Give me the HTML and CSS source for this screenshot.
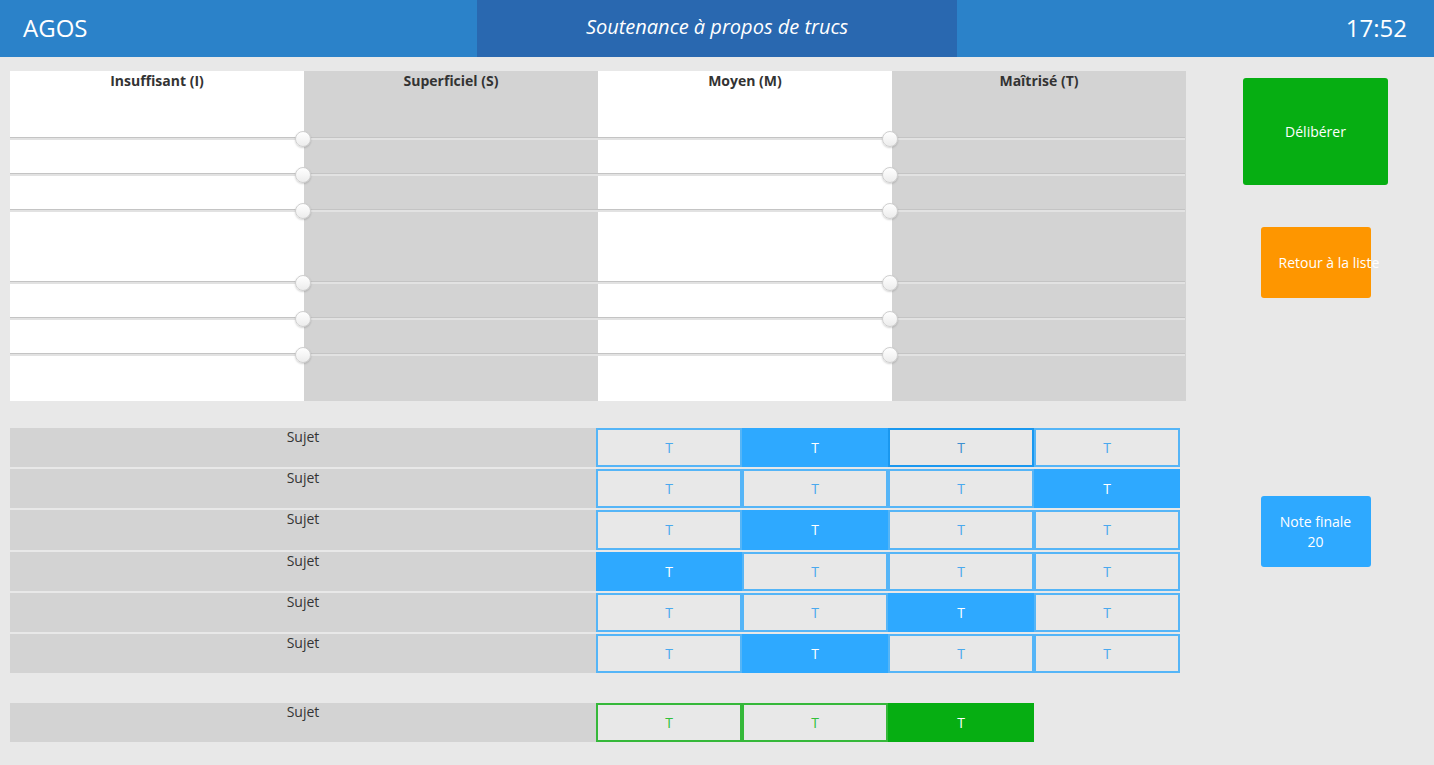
FILE: index.html
```html
<!DOCTYPE html>
<html lang="fr">
<head>
<meta charset="utf-8">
<title>AGOS</title>
<link rel="stylesheet" href="styles.css">
</head>
<body>
<header class="topbar">
  <div class="brand">AGOS</div>
  <div class="title">Soutenance à propos de trucs</div>
  <div class="clock">17:52</div>
</header>
<main class="main">
  <section class="content">
    <div class="scale">
      <div class="scale-head">
        <div>Insuffisant (I)</div>
        <div>Superficiel (S)</div>
        <div>Moyen (M)</div>
        <div>Maîtrisé (T)</div>
      </div>
      <div class="sliders">
        <div class="slot"><div class="track"><span class="knob lo"></span><span class="knob hi"></span></div></div>
        <div class="slot"><div class="track"><span class="knob lo"></span><span class="knob hi"></span></div></div>
        <div class="slot"><div class="track"><span class="knob lo"></span><span class="knob hi"></span></div></div>
        <div class="slot"></div>
        <div class="slot"><div class="track"><span class="knob lo"></span><span class="knob hi"></span></div></div>
        <div class="slot"><div class="track"><span class="knob lo"></span><span class="knob hi"></span></div></div>
        <div class="slot"><div class="track"><span class="knob lo"></span><span class="knob hi"></span></div></div>
      </div>
    </div>

    <div class="grades">
      <div class="subject">Sujet</div>
      <button class="opt">T</button><button class="opt on">T</button><button class="opt focus">T</button><button class="opt">T</button>
      <div class="subject">Sujet</div>
      <button class="opt">T</button><button class="opt">T</button><button class="opt">T</button><button class="opt on">T</button>
      <div class="subject">Sujet</div>
      <button class="opt">T</button><button class="opt on">T</button><button class="opt">T</button><button class="opt">T</button>
      <div class="subject">Sujet</div>
      <button class="opt on">T</button><button class="opt">T</button><button class="opt">T</button><button class="opt">T</button>
      <div class="subject">Sujet</div>
      <button class="opt">T</button><button class="opt">T</button><button class="opt on">T</button><button class="opt">T</button>
      <div class="subject">Sujet</div>
      <button class="opt">T</button><button class="opt on">T</button><button class="opt">T</button><button class="opt">T</button>
    </div>

    <div class="grades final">
      <div class="subject">Sujet</div>
      <button class="opt green">T</button><button class="opt green">T</button><button class="opt green on">T</button>
    </div>
  </section>

  <aside class="actions">
    <button class="act deliberate">Délibérer</button>
    <button class="act back">Retour à la liste</button>
    <button class="act note">Note finale<br>20</button>
  </aside>
</main>
</body>
</html>
```
FILE: styles.css
```css
* { box-sizing: border-box; }

html, body {
  margin: 0;
  padding: 0;
}

body {
  background: #e8e8e8;
  font-family: "Open Sans", "DejaVu Sans", sans-serif;
  color: #333;
  width: 1434px;
  height: 765px;
  overflow: hidden;
}

/* Top bar */
.topbar {
  height: 57px;
  background: #2b82c9;
  color: #fff;
  display: grid;
  grid-template-columns: 1fr 480px 1fr;
  align-items: stretch;
}

.brand {
  font-size: 24px;
  line-height: 55px;
  padding-left: 23px;
}

.title {
  background: #2968b0;
  font-size: 20px;
  font-style: italic;
  text-align: center;
  line-height: 54px;
}

.clock {
  font-size: 24px;
  line-height: 55px;
  text-align: right;
  padding-right: 27px;
}

/* Main */
.main {
  display: flex;
  padding: 14px 0 0 10px;
}

.content {
  width: 1176px;
  flex: none;
}

/* Scale block */
.scale {
  height: 330px;
  background: linear-gradient(to right,
    #ffffff 0 294px,
    #d3d3d3 294px 588px,
    #ffffff 588px 882px,
    #d3d3d3 882px 1176px);
}

.scale-head {
  display: grid;
  grid-template-columns: repeat(4, 1fr);
  font-size: 14px;
  font-weight: 700;
  line-height: 20px;
  text-align: center;
  color: #333;
}

.sliders {
  margin-top: 29px;
}

.slot {
  height: 36px;
  display: flex;
  align-items: center;
}

.track {
  position: relative;
  width: 1175px;
  height: 3px;
  background: #e2e2e2;
  border-top: 1px solid #c4c4c4;
}

.knob {
  position: absolute;
  top: 50%;
  width: 16px;
  height: 16px;
  margin-top: -8px;
  border-radius: 50%;
  background: linear-gradient(#ffffff, #ececec);
  border: 1px solid #cfcfcf;
  box-shadow: 0 1px 2px rgba(0, 0, 0, 0.18);
}

.knob.lo { left: 285px; }
.knob.hi { left: 872px; }

/* Grades */
.grades {
  margin-top: 27px;
  display: grid;
  grid-template-columns: 586px repeat(4, 146px);
  grid-auto-rows: 39.2px;
  row-gap: 2px;
}

.grades.final {
  margin-top: 30px;
  grid-template-columns: 586px repeat(3, 146px);
}

.subject {
  background: #d3d3d3;
  font-size: 14px;
  line-height: 18px;
  text-align: center;
  color: #333;
}

.opt {
  margin: 0;
  padding: 0;
  font-family: "Open Sans", "DejaVu Sans", sans-serif;
  font-size: 14px;
  background: #e8e8e8;
  border: 2px solid #55b5f7;
  color: #4aa9ee;
  border-radius: 0;
}

.opt.on {
  background: #2ea9ff;
  border-color: #2ea9ff;
  color: #fff;
}

.opt.focus {
  border-color: #1a98ef;
  color: #3d8fd0;
}

.opt.green {
  border-color: #35b83a;
  color: #33c03a;
}

.opt.green.on {
  background: #06ae12;
  border-color: #06ae12;
  color: #fff;
}

/* Actions */
.actions {
  flex: 1;
  display: flex;
  flex-direction: column;
  align-items: center;
  padding-left: 11px;
}

.act {
  margin: 0;
  border: 0;
  border-radius: 3px;
  color: #fff;
  font-family: "Open Sans", "DejaVu Sans", sans-serif;
  font-size: 14px;
  line-height: 20px;
  white-space: nowrap;
}

.deliberate {
  margin-top: 7px;
  width: 145px;
  height: 107px;
  background: #06ae12;
}

.back {
  margin-top: 42px;
  width: 110px;
  height: 71px;
  background: #fe9600;
  text-align: left;
  padding: 0 0 0 18px;
}

.note {
  margin-top: 198px;
  width: 110px;
  height: 71px;
  background: #2ea9ff;
}
```
